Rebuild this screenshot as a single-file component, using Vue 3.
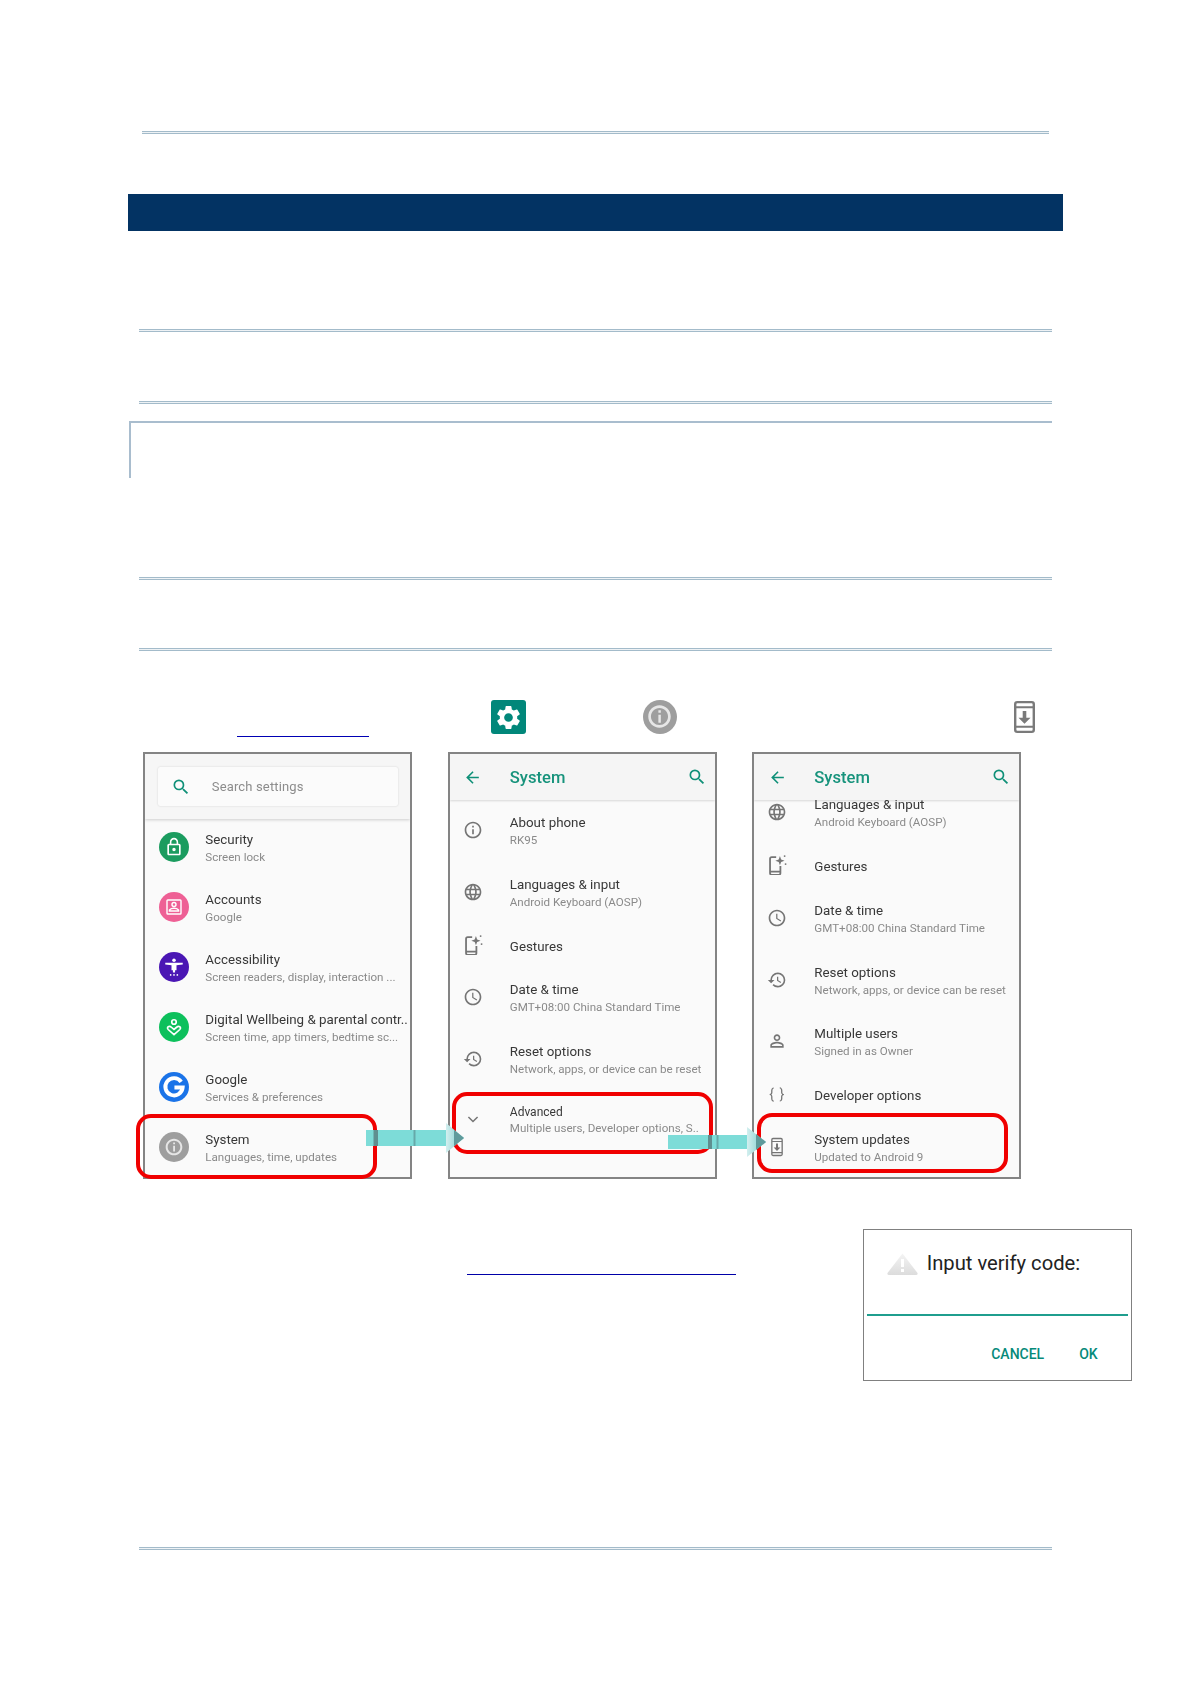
<script setup>
const I = {
  search: '<path fill="currentColor" d="M15.5 14h-.79l-.28-.27A6.47 6.47 0 0 0 16 9.5 6.5 6.5 0 1 0 9.5 16c1.61 0 3.09-.59 4.23-1.57l.27.28v.79l5 4.99L20.49 19l-4.99-5zm-6 0C7.01 14 5 11.99 5 9.5S7.01 5 9.5 5 14 7.01 14 9.5 11.99 14 9.5 14z"/>',
  back: '<path fill="currentColor" d="M20 11H7.83l5.59-5.59L12 4l-8 8 8 8 1.41-1.41L7.83 13H20v-2z"/>',
  info: '<path fill="currentColor" d="M11 7h2v2h-2zm0 4h2v6h-2zm1-9C6.48 2 2 6.48 2 12s4.48 10 10 10 10-4.48 10-10S17.52 2 12 2zm0 18c-4.41 0-8-3.59-8-8s3.59-8 8-8 8 3.59 8 8-3.59 8-8 8z"/>',
  globe: '<path fill="currentColor" d="M11.99 2C6.47 2 2 6.48 2 12s4.47 10 9.99 10C17.52 22 22 17.52 22 12S17.52 2 11.99 2zm6.93 6h-2.95c-.32-1.25-.78-2.45-1.38-3.56 1.84.63 3.37 1.91 4.33 3.56zM12 4.04c.83 1.2 1.48 2.53 1.91 3.96h-3.82c.43-1.43 1.08-2.76 1.91-3.96zM4.26 14C4.1 13.36 4 12.69 4 12s.1-1.36.26-2h3.38c-.08.66-.14 1.32-.14 2 0 .68.06 1.34.14 2H4.26zm.82 2h2.95c.32 1.25.78 2.45 1.38 3.56-1.84-.63-3.37-1.9-4.33-3.56zm2.95-8H5.08c.96-1.66 2.49-2.93 4.33-3.56C8.81 5.55 8.35 6.75 8.03 8zM12 19.96c-.83-1.2-1.48-2.53-1.91-3.96h3.82c-.43 1.43-1.08 2.76-1.91 3.96zM14.34 14H9.66c-.09-.66-.16-1.32-.16-2 0-.68.07-1.35.16-2h4.68c.09.65.16 1.32.16 2 0 .68-.07 1.34-.16 2zm.25 5.56c.6-1.11 1.06-2.31 1.38-3.56h2.95c-.96 1.65-2.49 2.93-4.33 3.56zM16.36 14c.08-.66.14-1.32.14-2 0-.68-.06-1.34-.14-2h3.38c.16.64.26 1.31.26 2s-.1 1.36-.26 2h-3.38z"/>',
  gesture: '<g transform="translate(-2 -1.5) scale(1.13)"><path fill="none" stroke="currentColor" stroke-width="1.9" d="M11.5 3.500H6.800A1.800 1.800 0 0 0 5 5.300v15.400a1.800 1.800 0 0 0 1.800 1.800h7.400a1.800 1.800 0 0 0 1.800-1.800V13"/><path fill="currentColor" d="M5 18h11v2H5zM15.500 2.500l1.300 3.600 3.600 1.300-3.600 1.300-1.300 3.600-1.300-3.600-3.600-1.300 3.600-1.300z"/><circle fill="currentColor" cx="20.500" cy="2.500" r="1"/><circle fill="currentColor" cx="21.500" cy="11" r="1"/></g>',
  clock: '<path fill="currentColor" d="M11.99 2C6.47 2 2 6.48 2 12s4.47 10 9.99 10C17.52 22 22 17.52 22 12S17.52 2 11.99 2zM12 20c-4.42 0-8-3.58-8-8s3.58-8 8-8 8 3.58 8 8-3.58 8-8 8zm.5-13H11v6l5.25 3.15.75-1.23-4.5-2.67z"/>',
  history: '<path fill="currentColor" d="M13 3a9 9 0 0 0-9 9H1l3.89 3.89.07.14L9 12H6c0-3.87 3.13-7 7-7s7 3.13 7 7-3.13 7-7 7c-1.93 0-3.68-.79-4.94-2.06l-1.42 1.42A8.954 8.954 0 0 0 13 21a9 9 0 0 0 0-18zm-1 5v5l4.28 2.54.72-1.21-3.5-2.08V8H12z"/>',
  person: '<path fill="currentColor" d="M12 5.900a2.100 2.100 0 1 1 0 4.200 2.100 2.100 0 0 1 0-4.200m0 9c2.970 0 6.100 1.460 6.100 2.100v1.100H5.900V17c0-.640 3.130-2.100 6.100-2.100M12 4C9.790 4 8 5.790 8 8s1.790 4 4 4 4-1.790 4-4-1.790-4-4-4zm0 9c-2.670 0-8 1.340-8 4v3h16v-3c0-2.660-5.330-4-8-4z"/>',
  chevron: '<path fill="none" stroke="currentColor" stroke-width="1.8" d="M6.500 9.500l5.500 5.500 5.500-5.500"/>',
  update: '<g fill="none" stroke="currentColor"><rect x="5.800" y="1.800" width="12.400" height="20.400" rx="1.400" stroke-width="1.600"/><path stroke-width="1.300" d="M6 5.300h12M6 18.700h12"/></g><path fill="currentColor" d="M16 12.500h-2.800V7.800h-2.400v4.700H8l4 4.200z"/>',
  lock: '<path fill="#fff" d="M12 17c1.100 0 2-.900 2-2s-.900-2-2-2-2 .900-2 2 .900 2 2 2zm6-9h-1V6c0-2.760-2.240-5-5-5S7 3.240 7 6v2H6c-1.100 0-2 .900-2 2v10c0 1.100.900 2 2 2h12c1.100 0 2-.900 2-2V10c0-1.100-.900-2-2-2zM8.900 6c0-1.710 1.390-3.100 3.100-3.100s3.100 1.390 3.100 3.100v2H8.900V6zM18 20H6V10h12v10z"/>',
  account: '<g fill="none" stroke="#fff" stroke-width="1.700"><rect x="3.600" y="3.600" width="16.800" height="16.800" rx="1"/><circle cx="12" cy="9" r="2.400"/><path d="M6.500 15.500c1.500-1.600 3.500-2 5.500-2s4 .400 5.500 2v1.300h-11z"/></g>',
  access: '<g fill="#fff"><circle cx="12" cy="4" r="2.100"/><path d="M1.500 7h21v2l-7.500 1v6h-1.700v2.600h-2.600V16H9v-6L1.500 9z"/><circle cx="8" cy="21.500" r="1"/><circle cx="12" cy="21.500" r="1"/><circle cx="16" cy="21.500" r="1"/></g>',
  well: '<g fill="none" stroke="#fff" stroke-width="2"><circle cx="12" cy="6" r="2.700"/><path d="M12 21.200l-7-6.200c-1.600-1.600-.600-3.800 1.400-3.800 1.200 0 1.900.600 2.800 1.400l2.800 2.400 2.800-2.400c.900-.800 1.600-1.400 2.800-1.400 2 0 3 2.200 1.400 3.800z"/></g>',
  google: '<path fill="none" stroke="#fff" stroke-width="3.600" d="M18.600 7.200A8 8 0 1 0 20 12.500h-7.600"/>',
  sys: '<path fill="#e6e6e6" d="M11 6.500h2.200v2.200H11zm0 4h2.200v7H11zM12 2C6.480 2 2 6.480 2 12s4.480 10 10 10 10-4.480 10-10S17.520 2 12 2zm0 17.600c-4.200 0-7.600-3.400-7.600-7.600S7.800 4.400 12 4.400s7.600 3.400 7.600 7.600-3.400 7.600-7.600 7.600z"/>',
  gear: '<path fill="#fff" fill-rule="evenodd" d="M19.14 12.94c.04-.3.06-.61.06-.94 0-.32-.02-.64-.07-.94l2.03-1.58a.49.49 0 0 0 .12-.61l-1.92-3.32a.488.488 0 0 0-.59-.22l-2.39.96c-.5-.38-1.03-.7-1.62-.94l-.36-2.54a.484.484 0 0 0-.48-.41h-3.84c-.24 0-.43.17-.47.41l-.36 2.54c-.59.24-1.13.57-1.62.94l-2.39-.96c-.22-.08-.47 0-.59.22L2.74 8.87c-.12.21-.08.47.12.61l2.03 1.58c-.05.3-.09.63-.09.94s.02.64.07.94l-2.03 1.58a.49.49 0 0 0-.12.61l1.92 3.32c.12.22.37.29.59.22l2.39-.96c.5.38 1.03.7 1.62.94l.36 2.54c.05.24.24.41.48.41h3.84c.24 0 .44-.17.47-.41l.36-2.54c.59-.24 1.13-.56 1.62-.94l2.39.96c.22.08.47 0 .59-.22l1.92-3.32c.12-.22.07-.47-.12-.61l-2.01-1.58zM12 15.600A3.600 3.600 0 1 1 12 8.400a3.600 3.600 0 0 1 0 7.200z"/>'
}

const mainRows = [
  { icon: 'lock', bg: '#1b9c5f', t: 'Security', s: 'Screen lock' },
  { icon: 'account', bg: '#ee6095', t: 'Accounts', s: 'Google' },
  { icon: 'access', bg: '#4a16b4', t: 'Accessibility', s: 'Screen readers, display, interaction ...' },
  { icon: 'well', bg: '#0dc05c', t: 'Digital Wellbeing & parental contr..', s: 'Screen time, app timers, bedtime sc...' },
  { icon: 'google', bg: '#1a73e8', t: 'Google', s: 'Services & preferences' },
  { icon: 'sys', bg: '#9e9e9e', t: 'System', s: 'Languages, time, updates' }
]
const sys1 = [
  { icon: 'info', t: 'About phone', s: 'RK95' },
  { icon: 'globe', t: 'Languages & input', s: 'Android Keyboard (AOSP)' },
  { icon: 'gesture', t: 'Gestures' },
  { icon: 'clock', t: 'Date & time', s: 'GMT+08:00 China Standard Time' },
  { icon: 'history', t: 'Reset options', s: 'Network, apps, or device can be reset' },
  { icon: 'chevron', t: 'Advanced', s: 'Multiple users, Developer options, S..', adv: true }
]
const sys2 = [
  { icon: 'globe', t: 'Languages & input', s: 'Android Keyboard (AOSP)' },
  { icon: 'gesture', t: 'Gestures' },
  { icon: 'clock', t: 'Date & time', s: 'GMT+08:00 China Standard Time' },
  { icon: 'history', t: 'Reset options', s: 'Network, apps, or device can be reset' },
  { icon: 'person', t: 'Multiple users', s: 'Signed in as Owner' },
  { code: true, t: 'Developer options' },
  { icon: 'update', t: 'System updates', s: 'Updated to Android 9' }
]
const systemPanels = [
  { rows: sys1, cls: 'first' },
  { rows: sys2, cls: 'scrolled' }
]
</script>

<template>
  <div class="page">
    <div class="rule top-rule"></div>
    <div class="band"></div>
    <div class="rule r-a"></div>
    <div class="rule r-b"></div>
    <div class="corner"></div>
    <div class="rule r-c"></div>
    <div class="rule r-d"></div>

    <div class="icon-row">
      <span class="link-line"></span>
      <span class="gear-tile"><svg viewBox="0 0 24 24" v-html="I.gear"></svg></span>
      <span class="info-disc"><svg viewBox="0 0 24 24" v-html="I.sys"></svg></span>
      <svg class="update-big" viewBox="5 1 14 22" preserveAspectRatio="none" v-html="I.update"></svg>
    </div>

    <div class="shots">
      <section class="panel">
        <div class="search-head">
          <div class="search-box">
            <svg class="teal ic-search" viewBox="0 0 24 24" v-html="I.search"></svg>
            <span>Search settings</span>
          </div>
        </div>
        <div class="row main" v-for="r in mainRows" :key="r.t">
          <span class="disc" :class="{ big: r.icon === 'google' }" :style="{ background: r.bg }"><svg viewBox="0 0 24 24" v-html="I[r.icon]"></svg></span>
          <div class="txt">
            <div class="t">{{ r.t }}</div>
            <div class="s">{{ r.s }}</div>
          </div>
        </div>
      </section>

      <section class="panel" v-for="p in systemPanels" :key="p.cls">
        <div class="sys-head">
          <svg class="teal ic-back" viewBox="0 0 24 24" v-html="I.back"></svg>
          <span class="sys-title">System</span>
          <svg class="teal ic-find" viewBox="0 0 24 24" v-html="I.search"></svg>
        </div>
        <div class="list" :class="p.cls">
          <div class="row sys" v-for="r in p.rows" :key="r.t" :class="{ two: r.s, adv: r.adv }">
            <span class="slot">
              <span v-if="r.code" class="braces">{ }</span>
              <svg v-else viewBox="0 0 24 24" v-html="I[r.icon]"></svg>
            </span>
            <div class="txt">
              <div class="t">{{ r.t }}</div>
              <div v-if="r.s" class="s">{{ r.s }}</div>
            </div>
          </div>
        </div>
      </section>

      <span class="mark m1"></span>
      <span class="mark m2"></span>
      <span class="mark m3"></span>

      <svg class="arrow a1" viewBox="0 0 98 30">
        <defs>
          <linearGradient id="hd" x1="0" x2="1" y1="0" y2="0">
            <stop offset="0" stop-color="#d3efef" />
            <stop offset="1" stop-color="#6fc9c8" />
          </linearGradient>
        </defs>
        <rect x="0" y="7" width="82" height="16" fill="#7ddcd8" />
        <rect x="7.500" y="7" width="4.500" height="16" fill="#5f8f90" />
        <rect x="47.500" y="7" width="2" height="16" fill="#66a9a9" />
        <polygon points="80,0 98,15 80,30" fill="url(#hd)" />
        <polygon points="88,6.700 98,15 88,23.300" fill="#5f9a9b" />
      </svg>
      <svg class="arrow a2" viewBox="0 0 98 30">
        <rect x="0" y="8" width="82" height="14" fill="#7ddcd8" />
        <rect x="40" y="8" width="4" height="14" fill="#5f8f90" />
        <rect x="48.500" y="8" width="2" height="14" fill="#66a9a9" />
        <polygon points="79,0 98,15 79,30" fill="url(#hd)" />
        <polygon points="88,7 98,15 88,23" fill="#5f9a9b" />
      </svg>
    </div>

    <div class="lower">
      <span class="link-line wide"></span>
      <div class="dialog">
        <div class="dlg-head">
          <svg class="warn" viewBox="0 0 31 22">
            <defs>
              <linearGradient id="wg" x1="0" x2="0" y1="0" y2="1">
                <stop offset="0" stop-color="#f4f4f4" />
                <stop offset="1" stop-color="#dcdcdc" />
              </linearGradient>
            </defs>
            <path d="M15.500 0.500 L30.500 20 Q31 22 29 22 H2 Q0 22 .5 20 Z" fill="url(#wg)" />
            <rect x="14" y="6" width="3" height="8" fill="#fff" />
            <rect x="14" y="16" width="3" height="3" fill="#fff" />
          </svg>
          <span class="dlg-title">Input verify code:</span>
        </div>
        <div class="dlg-line"></div>
        <div class="dlg-btns">
          <span>CANCEL</span>
          <span>OK</span>
        </div>
      </div>
    </div>

    <div class="rule r-e"></div>
  </div>
</template>

<style>
html, body { margin: 0; background: #fff; }
</style>

<style scoped>
.page {
  width: 1191px;
  height: 1683px;
  overflow: hidden;
  display: flex;
  flex-direction: column;
  font-family: Roboto, "Liberation Sans", sans-serif;
  background: #fff;
}
.rule {
  height: 3px;
  margin-left: 139px;
  width: 913px;
  flex: none;
  box-sizing: border-box;
  border-top: 1px solid #a3bbca;
  border-bottom: 1px solid #a3bbca;
  background: #eef2f5;
}
.top-rule { margin-top: 131px; margin-left: 141.500px; width: 907.500px; }
.band { margin: 60px 0 0 128px; width: 935px; height: 37px; background: #033363; flex: none; }
.r-a { margin-top: 98px; }
.r-b { margin-top: 69px; }
.corner {
  margin: 17px 0 0 129px;
  width: 923px;
  height: 57px;
  flex: none;
  box-sizing: border-box;
  border-top: 2px solid #a9bdce;
  border-left: 2px solid #a9bdce;
}
.r-c { margin-top: 99px; }
.r-d { margin-top: 68px; }

.icon-row {
  margin-top: 48px;
  height: 38px;
  display: flex;
  flex: none;
  align-items: flex-start;
}
.link-line {
  display: block;
  flex: none;
  width: 132px;
  height: 1px;
  margin: 36.500px 0 0 237px;
  background: #0000b4;
}
.gear-tile {
  margin-left: 122px;
  margin-top: 1px;
  width: 35px;
  height: 34px;
  border-radius: 3px;
  background: #01877a;
  display: flex;
  align-items: center;
  justify-content: center;
}
.gear-tile svg { width: 29px; height: 29px; }
.info-disc {
  margin-left: 116.700px;
  margin-top: 0.500px;
  width: 34px;
  height: 34px;
  border-radius: 50%;
  background: #9e9e9e;
  display: flex;
  align-items: center;
  justify-content: center;
}
.info-disc svg { width: 27px; height: 27px; }
.update-big {
  margin-left: 337.500px;
  margin-top: 1.500px;
  width: 21px;
  height: 32px;
  color: #7a7a7a;
}

.shots {
  position: relative;
  margin: 15px 0 0 143.300px;
  display: flex;
  gap: 35.500px;
  flex: none;
  width: 879px;
  height: 427px;
}
.panel {
  width: 269px;
  height: 427px;
  flex: none;
  box-sizing: border-box;
  border: 2px solid #848484;
  background: #fafafa;
  overflow: hidden;
  filter: blur(0.3px);
  display: flex;
  flex-direction: column;
}
.teal { color: #0f9078; }
.search-head {
  flex: none;
  height: 64.800px;
  box-sizing: border-box;
  padding: 13px 12px 0 12.500px;
  background: #f6f6f6;
  box-shadow: 0 1px 3px rgba(0, 0, 0, 0.18);
  position: relative;
  z-index: 1;
}
.search-box {
  height: 39px;
  width: 240px;
  box-sizing: border-box;
  background: #fbfbfb;
  border-radius: 2px;
  box-shadow: 0 0 2px rgba(0, 0, 0, 0.16);
  display: flex;
  align-items: center;
  font-size: 13px;
  letter-spacing: 0.15px;
  color: #8c8c8c;
}
.ic-search { width: 20px; height: 20px; margin-left: 13.500px; margin-right: 20.500px; }
.sys-head {
  flex: none;
  height: 46px;
  display: flex;
  align-items: center;
  background: #f5f5f5;
  box-shadow: 0 1px 2px rgba(0, 0, 0, 0.14);
  position: relative;
  z-index: 1;
}
.ic-back { width: 19px; height: 19px; margin-left: 13.500px; margin-right: 27.500px; flex: none; }
.sys-title { font-size: 16.600px; font-weight: 500; color: #17937c; flex: 1; }
.ic-find { width: 20px; height: 20px; margin-right: 8px; flex: none; }

.row { display: flex; align-items: center; flex: none; box-sizing: border-box; }
.row.main { height: 60px; }
.row.sys { height: 44.500px; }
.row.sys.two { height: 61.300px; }
.row.sys.adv { height: 59px; }
.list { display: flex; flex-direction: column; }
.list.first { margin-top: 1.200px; }
.list.scrolled { margin-top: -16.700px; }

.disc {
  flex: none;
  width: 30px;
  height: 30px;
  border-radius: 50%;
  margin: 0 16px 3px 14px;
  display: flex;
  align-items: center;
  justify-content: center;
}
.disc svg { width: 20px; height: 20px; }
.disc.big svg { width: 26px; height: 26px; }
.slot {
  flex: none;
  width: 46px;
  margin-right: 14px;
  margin-bottom: 3px;
  display: flex;
  justify-content: center;
  color: #757575;
}
.slot svg { width: 20px; height: 20px; display: block; }
.braces { font-size: 14px; line-height: 20px; letter-spacing: 1px; }
.txt { min-width: 0; white-space: nowrap; }
.t { font-size: 13.350px; line-height: 17px; color: #383838; }
.s { font-size: 11.600px; line-height: 17px; margin-top: 1px; color: #8a8a8a; }
.adv .t { font-size: 12px; line-height: 16px; }
.adv .s { line-height: 16px; margin-top: 0; }

.mark {
  position: absolute;
  box-sizing: border-box;
  border: 4px solid #f00000;
  border-radius: 15px;
}
.m1 { left: -7.300px; top: 362px; width: 240.700px; height: 64.700px; }
.m2 { left: 309px; top: 340px; width: 260.700px; height: 62px; }
.m3 { left: 614px; top: 360.700px; width: 251px; height: 60px; }
.arrow { position: absolute; width: 98px; height: 30px; }
.a1 { left: 223px; top: 371px; }
.a2 { left: 524.700px; top: 374.700px; }

.lower { display: flex; flex: none; margin-top: 50.300px; }
.link-line.wide { width: 268.700px; margin: 44.700px 0 0 467.300px; background: #0000a8; }
.dialog {
  margin-left: 127.300px;
  width: 268.400px;
  height: 151.400px;
  box-sizing: border-box;
  border: 1px solid #808080;
  background: #fff;
  flex: none;
}
.dlg-head { display: flex; align-items: center; height: 30px; margin: 18px 0 0 22.400px; }
.warn { width: 31px; height: 22px; flex: none; margin-right: 9px; margin-top: 1px; }
.dlg-title { font-size: 20.200px; color: #222; }
.dlg-line { height: 2px; margin: 36px 3px 0 3px; background: #1f9e8e; }
.dlg-btns {
  display: flex;
  justify-content: flex-end;
  gap: 35px;
  margin-top: 30px;
  padding-right: 33px;
  font-size: 14px;
  line-height: 16px;
  font-weight: 500;
  color: #068a7a;
}
.r-e { margin-top: 166px; }
</style>
